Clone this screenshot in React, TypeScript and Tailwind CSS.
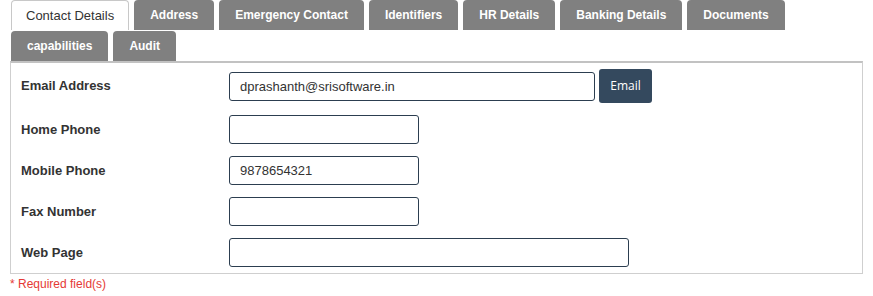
const tabs = [
  ['Contact Details', 'Address', 'Emergency Contact', 'Identifiers', 'HR Details', 'Banking Details', 'Documents'],
  ['capabilities', 'Audit'],
]

type Row = { label: string; value: string; width: string; button?: boolean }

const rows: Row[] = [
  { label: 'Email Address', value: 'dprashanth@srisoftware.in', width: 'w-[366px]', button: true },
  { label: 'Home Phone', value: '', width: 'w-[190px]' },
  { label: 'Mobile Phone', value: '9878654321', width: 'w-[190px]' },
  { label: 'Fax Number', value: '', width: 'w-[190px]' },
  { label: 'Web Page', value: '', width: 'w-[400px]' },
]

export default function App() {
  return (
    <div className="min-h-[296px] w-[873px] bg-white font-['Liberation_Sans',Arial,sans-serif] text-[#333]">
      <div className="flex flex-col gap-[1px] pl-[11px]">
        {tabs.map((line, i) => (
          <div key={i} className="flex gap-[5px]">
            {line.map((t) => {
              const active = t === 'Contact Details'
              return (
                <div
                  key={t}
                  className={
                    active
                      ? 'flex h-[30px] items-center rounded-t-[4px] border border-b-0 border-[#c8c8c8] bg-white px-[14px] text-[13px] text-[#333]'
                      : 'flex h-[30px] items-center rounded-t-[4px] bg-[#808080] px-4 text-[12px] font-bold text-white'
                  }
                >
                  {t}
                </div>
              )
            })}
          </div>
        ))}
      </div>

      <div className="ml-[10px] w-[853px] border border-t-2 border-[#cfcfcf] border-t-[#c2c2c2] pl-[10px]">
        {rows.map((r, i) => (
          <div key={r.label} className={`flex items-center ${i === 0 ? 'h-[46px]' : 'h-[41px]'}`}>
            <div className="w-[208px] text-[13px] font-bold text-[#333]">{r.label}</div>
            <input
              readOnly
              value={r.value}
              className={`${r.width} h-[29px] rounded-[3px] border border-[#2c3e50] bg-white px-[10px] text-[13px] text-[#333] outline-none`}
            />
            {r.button && (
              <button className="ml-[4px] h-[34px] w-[53px] rounded-[3px] bg-[#34495e] font-['Open_Sans',sans-serif] text-[12px] font-medium text-white">
                Email
              </button>
            )}
          </div>
        ))}
      </div>

      <div className="pl-[10px] pt-[1px] text-[12px] text-[#e53935]">* Required field(s)</div>
    </div>
  )
}
